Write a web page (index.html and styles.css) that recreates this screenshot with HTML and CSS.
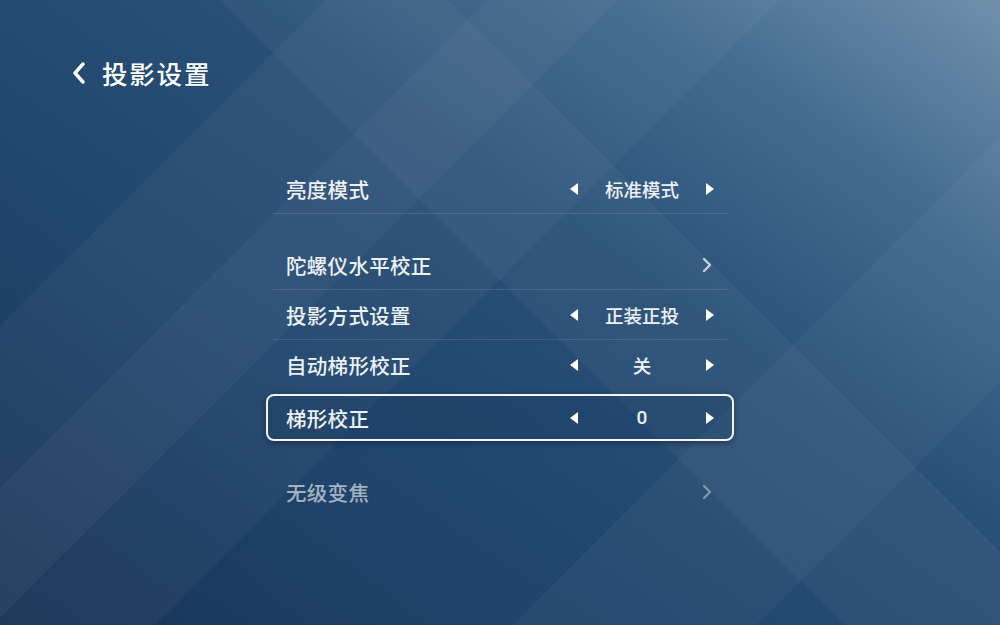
FILE: index.html
```html
<!DOCTYPE html>
<html lang="zh-CN">
<head>
<meta charset="utf-8">
<title>投影设置</title>
<link rel="stylesheet" href="styles.css">
</head>
<body>
<div class="screen">
  <header class="header">
    <svg class="back" viewBox="0 0 16 24" width="16" height="24"><path d="M12 3 L4 12 L12 21" fill="none" stroke="#ffffff" stroke-width="3.4" stroke-linecap="round" stroke-linejoin="round"/></svg>
    <h1 class="title">投影设置</h1>
  </header>
  <main class="menu">
    <div class="row sep">
      <span class="label">亮度模式</span>
      <span class="control">
        <svg class="tri" viewBox="0 0 10 14" width="10" height="14"><polygon points="9,1 9,13 1,7" fill="#fff"/></svg>
        <span class="value">标准模式</span>
        <svg class="tri" viewBox="0 0 10 14" width="10" height="14"><polygon points="1,1 1,13 9,7" fill="#fff"/></svg>
      </span>
    </div>
    <div class="row sep group">
      <span class="label">陀螺仪水平校正</span>
      <svg class="chev" viewBox="0 0 10 16" width="10" height="16"><path d="M2 2 L8 8 L2 14" fill="none" stroke="#c9d3dd" stroke-width="2.4" stroke-linecap="round" stroke-linejoin="round"/></svg>
    </div>
    <div class="row sep">
      <span class="label">投影方式设置</span>
      <span class="control">
        <svg class="tri" viewBox="0 0 10 14" width="10" height="14"><polygon points="9,1 9,13 1,7" fill="#fff"/></svg>
        <span class="value">正装正投</span>
        <svg class="tri" viewBox="0 0 10 14" width="10" height="14"><polygon points="1,1 1,13 9,7" fill="#fff"/></svg>
      </span>
    </div>
    <div class="row">
      <span class="label">自动梯形校正</span>
      <span class="control">
        <svg class="tri" viewBox="0 0 10 14" width="10" height="14"><polygon points="9,1 9,13 1,7" fill="#fff"/></svg>
        <span class="value">关</span>
        <svg class="tri" viewBox="0 0 10 14" width="10" height="14"><polygon points="1,1 1,13 9,7" fill="#fff"/></svg>
      </span>
    </div>
    <div class="row focus">
      <span class="label">梯形校正</span>
      <span class="control">
        <svg class="tri" viewBox="0 0 10 14" width="10" height="14"><polygon points="9,1 9,13 1,7" fill="#fff"/></svg>
        <span class="value num">0</span>
        <svg class="tri" viewBox="0 0 10 14" width="10" height="14"><polygon points="1,1 1,13 9,7" fill="#fff"/></svg>
      </span>
    </div>
    <div class="row dim">
      <span class="label">无级变焦</span>
      <svg class="chev" viewBox="0 0 10 16" width="10" height="16"><path d="M2 2 L8 8 L2 14" fill="none" stroke="#8796a8" stroke-width="2.4" stroke-linecap="round" stroke-linejoin="round"/></svg>
    </div>
  </main>
</div>
</body>
</html>
```

FILE: styles.css
```css
html, body {
  margin: 0;
  padding: 0;
}
body {
  width: 1000px;
  height: 625px;
  overflow: hidden;
  font-family: "Noto Sans CJK SC", "Noto Sans", sans-serif;
  color: #eef2f6;
}
.screen {
  width: 1000px;
  height: 625px;
  box-sizing: border-box;
  background:
    linear-gradient(45deg, transparent 52%, rgba(255,255,255,0.035) 52%, rgba(255,255,255,0.035) 66%, transparent 66%),
    linear-gradient(135deg, transparent 30%, rgba(255,255,255,0.03) 30%, rgba(255,255,255,0.03) 48%, transparent 48%),
    linear-gradient(-45deg, transparent 62%, rgba(255,255,255,0.035) 62%, rgba(255,255,255,0.035) 80%, transparent 80%),
    linear-gradient(45deg, rgba(0,0,0,0.10) 0%, transparent 30%),
    linear-gradient(135deg, transparent 70%, rgba(255,255,255,0.03) 70%, rgba(255,255,255,0.03) 85%, transparent 85%),
    linear-gradient(35deg, #193a60 0%, #21466e 35%, #2a5077 60%, #426a8e 80%, #7090ad 100%);
  padding-top: 56px;
}
.header {
  display: flex;
  align-items: center;
  padding-left: 71px;
  height: 34px;
}
.back {
  display: block;
  margin-right: 15px;
}
.title {
  margin: 0;
  font-size: 25.5px;
  font-weight: 500;
  letter-spacing: 1.8px;
  color: #ffffff;
  line-height: 34px;
}
.menu {
  margin-top: 74px;
  margin-left: 273px;
  width: 454px;
  display: flex;
  flex-direction: column;
}
.row {
  display: flex;
  align-items: center;
  height: 50px;
  padding: 0 12px 0 13px;
  box-sizing: border-box;
}
.row.sep {
  border-bottom: 1px solid rgba(255,255,255,0.12);
}
.row.group {
  margin-top: 26px;
}
.label {
  flex: 1;
  font-size: 20.5px;
  font-weight: 500;
  color: #eef2f6;
  letter-spacing: 0.3px;
}
.control {
  display: flex;
  align-items: center;
}
.tri {
  display: block;
}
.value {
  width: 126px;
  text-align: center;
  font-size: 18.5px;
  font-weight: 500;
  color: #eef2f6;
}
.value.num {
  font-family: "Roboto", "Noto Sans", sans-serif;
  font-size: 19px;
}
.chev {
  display: block;
  margin-right: 3px;
}
.row.focus {
  margin: 4px -7px 0;
  height: 47px;
  padding: 0 17px 0 18px;
  border: 2px solid #f2f5f8;
  border-radius: 8px;
  background: rgba(20, 50, 85, 0.2);
  box-shadow: 0 2px 6px rgba(0,0,0,0.35);
}
.row.dim {
  margin-top: 26px;
}
.row.dim .label {
  color: #a4b2c2;
}
```
